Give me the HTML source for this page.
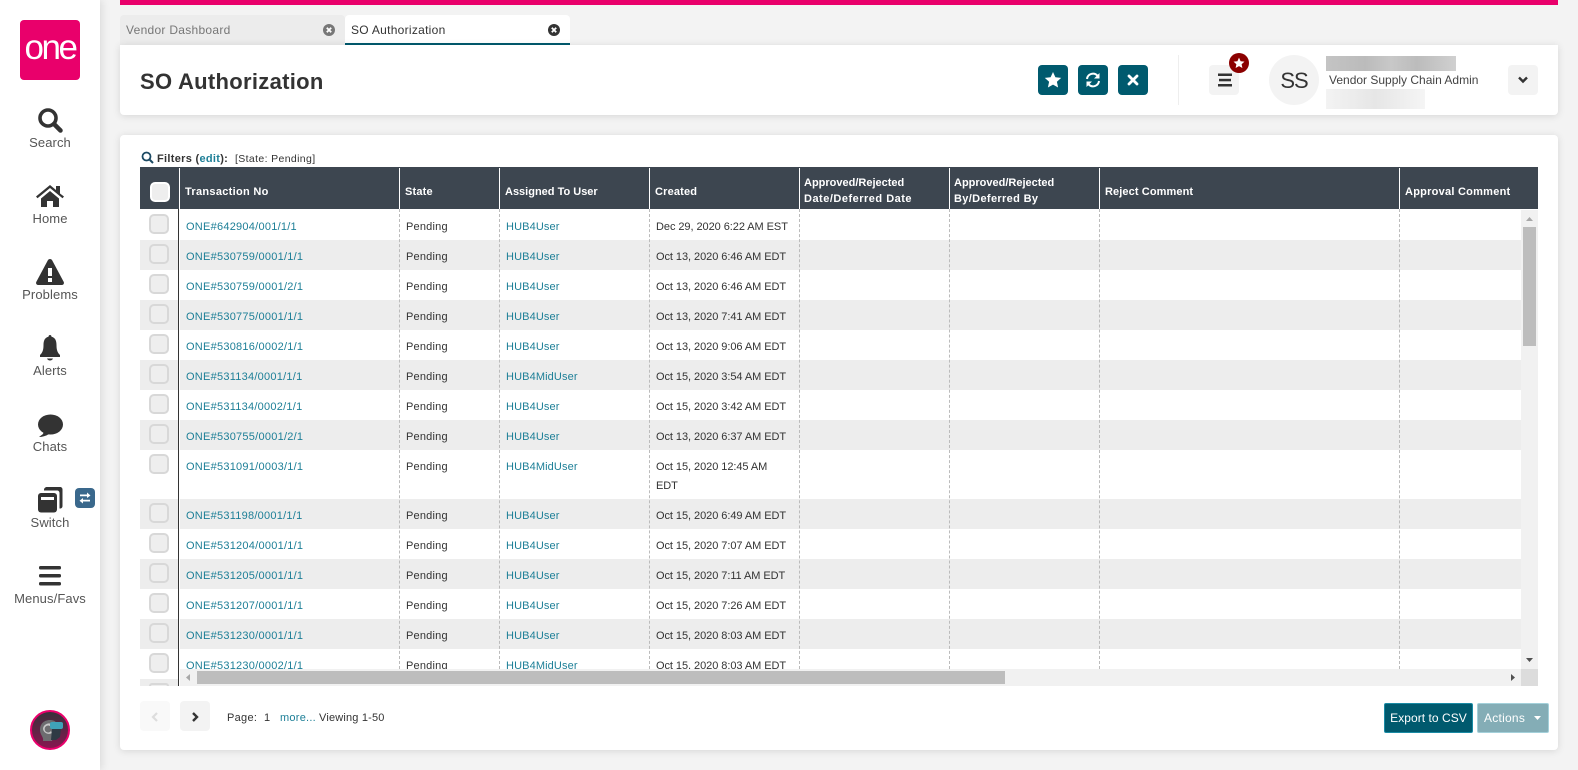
<!DOCTYPE html>
<html><head><meta charset="utf-8"><title>SO Authorization</title>
<style>
*{box-sizing:border-box}
html,body{margin:0;padding:0;width:1578px;height:770px;overflow:hidden;background:#f3f3f3;font-family:"Liberation Sans",Arial,sans-serif;color:#333}
.a{position:absolute}
#side{left:0;top:0;width:100px;height:770px;background:#fff;box-shadow:2px 0 8px rgba(0,0,0,.1)}
.nl{position:absolute;left:0;width:100px;text-align:center;font-size:13px;color:#555;line-height:16px;letter-spacing:.1px;margin-top:1px}
.card{position:absolute;left:120px;width:1438px;background:#fff;box-shadow:0 1px 8px rgba(0,0,0,.12)}
.tab{position:absolute;top:15px;width:225px;height:30px;font-size:12px;line-height:30px;padding-left:6px;letter-spacing:.28px;border-radius:4px 4px 0 0}
.btn{position:absolute;top:65px;width:30px;height:30px;background:#005a6e;border-radius:4px}
.gb{position:absolute;width:30px;height:30px;background:#f3f3f3;border-radius:4px}
.th{position:absolute;color:#fff;font-size:11px;font-weight:bold;line-height:16px;letter-spacing:.17px;margin-top:1px}
.vl{position:absolute;top:168px;width:1px;height:41px;background:#fff}
.dl{position:absolute;top:209px;width:0;height:460px;border-left:1px dashed #bbb}
.r{position:absolute;left:180px;width:1341px;height:30px}
.g{background:#ededed}
.lg{position:absolute;left:140px;width:38px;background:#ededed}
.c{position:absolute;left:149px;width:20px;height:20px;border:2px solid #d8d8d8;border-radius:5px;background:#eee}
.t{position:absolute;font-size:11px;line-height:18px;letter-spacing:.25px;white-space:nowrap;color:#333;margin-top:1px}
.l{color:#1d7f97}
.x1{left:186px}.x2{left:406px;letter-spacing:.2px}.x3{left:506px;letter-spacing:.12px}.x4{left:656px;letter-spacing:-.06px}
</style></head><body>

<div class="a" style="left:120px;top:0;width:1438px;height:5px;background:#e9006b"></div>

<div class="a" id="side">
  <div class="a" style="left:20px;top:20px;width:60px;height:60px;background:#e9006b;border-radius:4px;color:#fff;font-size:35px;line-height:56px;text-align:center;letter-spacing:-2.5px">one</div>
  <svg class="a" style="left:37px;top:106px" width="26" height="28" viewBox="0 0 26 28"><circle cx="11" cy="12" r="8" fill="none" stroke="#333" stroke-width="3.6"/><path d="M17 18l6.500 6.500" stroke="#333" stroke-width="4.500" stroke-linecap="round"/></svg>
  <div class="nl" style="top:134px">Search</div>
  <svg class="a" style="left:35px;top:184px" width="30" height="24" viewBox="0 0 30 24"><path fill="#333" d="M1 12.500L15 1l6 5V2h4v7.500l4 3-1.500 1.800L15 4 2.500 14.300zM6 14.500L15 7l9 7.500V23h-6v-6h-6v6H6z"/></svg>
  <div class="nl" style="top:210px">Home</div>
  <svg class="a" style="left:35px;top:258px" width="30" height="28" viewBox="0 0 30 28"><path fill="#333" d="M15 1c1 0 1.700.5 2.200 1.400l11.500 21.500c.7 1.400-.2 3.100-1.800 3.100H3.100c-1.600 0-2.500-1.700-1.800-3.100L12.800 2.400C13.300 1.500 14 1 15 1z"/><rect x="13" y="10" width="4" height="8" fill="#fff"/><rect x="13" y="20" width="4" height="4" fill="#fff"/></svg>
  <div class="nl" style="top:286px">Problems</div>
  <svg class="a" style="left:38px;top:334px" width="24" height="28" viewBox="0 0 24 28"><path fill="#333" d="M12 1c1 0 1.500.8 1.500 1.800C17 3.500 18.500 6.500 18.500 11c0 6 1.500 8 3.500 10v2H2v-2c2-2 3.500-4 3.500-10 0-4.500 1.500-7.500 5-8.200C10.500 1.800 11 1 12 1z"/><path fill="#333" d="M9 24.500h6c-.5 1.200-1.700 2-3 2s-2.500-.8-3-2z"/></svg>
  <div class="nl" style="top:362px">Alerts</div>
  <svg class="a" style="left:37px;top:414px" width="26" height="24" viewBox="0 0 26 24"><ellipse cx="13.500" cy="10.500" rx="12.500" ry="10" fill="#333"/><path fill="#333" d="M7 17l-1 3-4 3c3 0 7-1 10-3z"/></svg>
  <div class="nl" style="top:438px">Chats</div>
  <svg class="a" style="left:37px;top:486px" width="28" height="28" viewBox="0 0 28 28"><path fill="#333" d="M10 1h13c1.500 0 2.500 1 2.500 2.500V20c0 1.500-1 2.500-2.500 2.500h-.5V7c0-1.500-1-2.500-2.500-2.500H7V4c0-1.800 1.200-3 3-3z"/><rect x="1" y="7" width="19" height="19.500" rx="3" fill="#333"/><rect x="4" y="11" width="13" height="3" fill="#fff"/></svg>
  <div class="a" style="left:75px;top:488px;width:20px;height:20px;background:#3a688c;border-radius:4px"></div>
  <svg class="a" style="left:78px;top:491px" width="14" height="14" viewBox="0 0 14 14"><path fill="#fff" d="M2 3.500h7V1.500l3.500 3L9 7V5.300H2zM12 8.700H5V7L1.500 9.700 5 12.500v-2h7z"/></svg>
  <div class="nl" style="top:514px">Switch</div>
  <svg class="a" style="left:39px;top:565px" width="22" height="22" viewBox="0 0 22 22"><rect y="1" width="22" height="3.500" rx="1.500" fill="#333"/><rect y="9" width="22" height="3.500" rx="1.500" fill="#333"/><rect y="17" width="22" height="3.500" rx="1.500" fill="#333"/></svg>
  <div class="nl" style="top:590px">Menus/Favs</div>
  <svg class="a" style="left:30px;top:710px" width="40" height="40" viewBox="0 0 40 40"><defs><linearGradient id="av" x1="0" y1="0" x2="0" y2="1"><stop offset="0" stop-color="#35323a"/><stop offset="1" stop-color="#8a1650"/></linearGradient></defs><circle cx="20" cy="20" r="19" fill="url(#av)" stroke="#e9006b" stroke-width="2"/><path fill="#6d6d70" d="M10 20c0-7 5-10 10-10 3 0 5 1 7 3l-3 8-2 10H13c1-4-3-6-3-11z"/><path fill="#c9c9c9" d="M13 19a6 6 0 0 1 10-4l-2 2a3.500 3.500 0 1 0 0 4l1 2a6 6 0 0 1-9-4z"/><rect x="20" y="12" width="13" height="7" rx="2" fill="#3fa3b8"/><path fill="#2f3a44" d="M22 19h9l-1 8-4 3h-5z"/></svg>
</div>

<div class="tab" style="left:120px;background:#ececec;color:#777">Vendor Dashboard</div>
<svg class="a" style="left:322px;top:23px" width="14" height="14" viewBox="0 0 14 14"><circle cx="7" cy="7" r="6" fill="#777"/><path d="M4.800 4.800l4.400 4.400M9.200 4.800l-4.400 4.400" stroke="#fff" stroke-width="1.800"/></svg>
<div class="tab" style="left:345px;background:#fff;color:#333;border-bottom:2px solid #005a6e;line-height:31px">SO Authorization</div>
<svg class="a" style="left:547px;top:23px" width="14" height="14" viewBox="0 0 14 14"><circle cx="7" cy="7" r="6" fill="#333"/><path d="M4.800 4.800l4.400 4.400M9.200 4.800l-4.400 4.400" stroke="#fff" stroke-width="1.800"/></svg>

<div class="card" style="top:45px;height:70px;border-radius:0 0 4px 4px"></div>
<div class="a" style="left:140px;top:67px;font-size:22px;font-weight:bold;line-height:30px;color:#333;letter-spacing:.3px">SO Authorization</div>

<div class="btn" style="left:1038px"></div>
<svg class="a" style="left:1044px;top:71px" width="18" height="18" viewBox="0 0 18 18"><path fill="#fff" d="M9 1l2.400 5.300 5.800.6-4.300 3.900 1.200 5.700L9 13.600l-5.100 2.900 1.200-5.700L.8 6.900l5.800-.6z"/></svg>
<div class="btn" style="left:1078px"></div>
<svg class="a" style="left:1085px;top:72px" width="16" height="16" viewBox="0 0 16 16"><path fill="none" stroke="#fff" stroke-width="2" d="M2 7a6 6 0 0 1 10.500-3.200M14 9a6 6 0 0 1-10.500 3.200"/><path fill="#fff" d="M14.500 1v5.500H9zM1.500 15V9.500H7z"/></svg>
<div class="btn" style="left:1118px"></div>
<svg class="a" style="left:1127px;top:74px" width="12" height="12" viewBox="0 0 12 12"><path d="M2 2l8 8M10 2l-8 8" stroke="#fff" stroke-width="2.800" stroke-linecap="round"/></svg>
<div class="a" style="left:1178px;top:55px;width:1px;height:50px;background:#eee"></div>
<div class="gb" style="left:1209px;top:65px"></div>
<svg class="a" style="left:1217px;top:72px" width="16" height="16" viewBox="0 0 16 16"><rect x="1" y="1.500" width="14" height="2.500" fill="#333"/><rect x="2" y="6.800" width="12" height="2.500" fill="#333"/><rect x="1" y="12" width="14" height="2.500" fill="#333"/></svg>
<div class="a" style="left:1229px;top:53px;width:20px;height:20px;border-radius:50%;background:#8b0000"></div>
<svg class="a" style="left:1233px;top:57px" width="12" height="12" viewBox="0 0 18 18"><path fill="#fff" d="M9 1l2.400 5.300 5.800.6-4.300 3.900 1.200 5.700L9 13.600l-5.100 2.900 1.200-5.700L.8 6.900l5.800-.6z"/></svg>
<div class="a" style="left:1269px;top:55px;width:50px;height:50px;border-radius:50%;background:#f3f3f3;font-size:22px;line-height:51px;text-align:center;color:#333;letter-spacing:-1px">SS</div>
<div class="a" style="left:1326px;top:56px;width:130px;height:15px;background:linear-gradient(90deg,#c4c4c4,#bbb 30%,#c8c8c8 50%,#bcbcbc 70%,#d0d0d0)"></div>
<div class="a" style="left:1329px;top:72px;font-size:12px;line-height:16px;color:#444;letter-spacing:0;white-space:nowrap">Vendor Supply Chain Admin</div>
<div class="a" style="left:1326px;top:89px;width:99px;height:20px;background:linear-gradient(90deg,#f3f3f3,#e6e6e6 50%,#f5f5f5)"></div>
<div class="gb" style="left:1508px;top:65px"></div>
<svg class="a" style="left:1517px;top:75px" width="12" height="10" viewBox="0 0 12 10"><path d="M2 2.500L6 6.500 10 2.500" fill="none" stroke="#333" stroke-width="2.400"/></svg>

<div class="card" style="top:135px;height:615px;border-radius:4px"></div>

<svg class="a" style="left:141px;top:151px" width="13" height="13" viewBox="0 0 13 13"><circle cx="5.500" cy="5.500" r="4" fill="none" stroke="#1c4a63" stroke-width="1.800"/><path d="M8.500 8.500l3.500 3.500" stroke="#1c4a63" stroke-width="2"/></svg>
<div class="t" style="left:157px;top:149px;font-weight:bold;letter-spacing:.3px">Filters (<span class="l">edit</span>):</div>
<div class="t" style="left:235px;top:149px;font-size:10.500px;letter-spacing:.36px">[State: Pending]</div>

<!-- table rows -->
<div class="r g" style="top:240px"></div>
<div class="r g" style="top:300px"></div>
<div class="r g" style="top:360px"></div>
<div class="r g" style="top:420px"></div>
<div class="r g" style="top:499px"></div>
<div class="r g" style="top:559px"></div>
<div class="r g" style="top:619px"></div>
<div class="lg" style="top:240px;height:30px"></div>
<div class="lg" style="top:300px;height:30px"></div>
<div class="lg" style="top:360px;height:30px"></div>
<div class="lg" style="top:420px;height:30px"></div>
<div class="lg" style="top:499px;height:30px"></div>
<div class="lg" style="top:559px;height:30px"></div>
<div class="lg" style="top:619px;height:30px"></div>
<div class="lg" style="top:679px;height:7px"></div>

<div class="c" style="top:214px"></div><div class="c" style="top:244px"></div><div class="c" style="top:274px"></div><div class="c" style="top:304px"></div><div class="c" style="top:334px"></div><div class="c" style="top:364px"></div><div class="c" style="top:394px"></div><div class="c" style="top:424px"></div><div class="c" style="top:454px"></div><div class="c" style="top:503px"></div><div class="c" style="top:533px"></div><div class="c" style="top:563px"></div><div class="c" style="top:593px"></div><div class="c" style="top:623px"></div><div class="c" style="top:653px"></div>
<div class="a" style="left:149px;top:683px;width:20px;height:3px;border:2px solid #d8d8d8;border-bottom:0;border-radius:5px 5px 0 0;background:#eee"></div>

<div class="t l x1" style="top:217px">ONE#642904/001/1/1</div><div class="t x2" style="top:217px">Pending</div><div class="t l x3" style="top:217px">HUB4User</div><div class="t x4" style="top:217px">Dec 29, 2020 6:22 AM EST</div>
<div class="t l x1" style="top:247px">ONE#530759/0001/1/1</div><div class="t x2" style="top:247px">Pending</div><div class="t l x3" style="top:247px">HUB4User</div><div class="t x4" style="top:247px">Oct 13, 2020 6:46 AM EDT</div>
<div class="t l x1" style="top:277px">ONE#530759/0001/2/1</div><div class="t x2" style="top:277px">Pending</div><div class="t l x3" style="top:277px">HUB4User</div><div class="t x4" style="top:277px">Oct 13, 2020 6:46 AM EDT</div>
<div class="t l x1" style="top:307px">ONE#530775/0001/1/1</div><div class="t x2" style="top:307px">Pending</div><div class="t l x3" style="top:307px">HUB4User</div><div class="t x4" style="top:307px">Oct 13, 2020 7:41 AM EDT</div>
<div class="t l x1" style="top:337px">ONE#530816/0002/1/1</div><div class="t x2" style="top:337px">Pending</div><div class="t l x3" style="top:337px">HUB4User</div><div class="t x4" style="top:337px">Oct 13, 2020 9:06 AM EDT</div>
<div class="t l x1" style="top:367px">ONE#531134/0001/1/1</div><div class="t x2" style="top:367px">Pending</div><div class="t l x3" style="top:367px">HUB4MidUser</div><div class="t x4" style="top:367px">Oct 15, 2020 3:54 AM EDT</div>
<div class="t l x1" style="top:397px">ONE#531134/0002/1/1</div><div class="t x2" style="top:397px">Pending</div><div class="t l x3" style="top:397px">HUB4User</div><div class="t x4" style="top:397px">Oct 15, 2020 3:42 AM EDT</div>
<div class="t l x1" style="top:427px">ONE#530755/0001/2/1</div><div class="t x2" style="top:427px">Pending</div><div class="t l x3" style="top:427px">HUB4User</div><div class="t x4" style="top:427px">Oct 13, 2020 6:37 AM EDT</div>
<div class="t l x1" style="top:457px">ONE#531091/0003/1/1</div><div class="t x2" style="top:457px">Pending</div><div class="t l x3" style="top:457px">HUB4MidUser</div><div class="t x4" style="top:457px">Oct 15, 2020 12:45 AM</div><div class="t x4" style="top:476px">EDT</div>
<div class="t l x1" style="top:506px">ONE#531198/0001/1/1</div><div class="t x2" style="top:506px">Pending</div><div class="t l x3" style="top:506px">HUB4User</div><div class="t x4" style="top:506px">Oct 15, 2020 6:49 AM EDT</div>
<div class="t l x1" style="top:536px">ONE#531204/0001/1/1</div><div class="t x2" style="top:536px">Pending</div><div class="t l x3" style="top:536px">HUB4User</div><div class="t x4" style="top:536px">Oct 15, 2020 7:07 AM EDT</div>
<div class="t l x1" style="top:566px">ONE#531205/0001/1/1</div><div class="t x2" style="top:566px">Pending</div><div class="t l x3" style="top:566px">HUB4User</div><div class="t x4" style="top:566px">Oct 15, 2020 7:11 AM EDT</div>
<div class="t l x1" style="top:596px">ONE#531207/0001/1/1</div><div class="t x2" style="top:596px">Pending</div><div class="t l x3" style="top:596px">HUB4User</div><div class="t x4" style="top:596px">Oct 15, 2020 7:26 AM EDT</div>
<div class="t l x1" style="top:626px">ONE#531230/0001/1/1</div><div class="t x2" style="top:626px">Pending</div><div class="t l x3" style="top:626px">HUB4User</div><div class="t x4" style="top:626px">Oct 15, 2020 8:03 AM EDT</div>
<div class="t l x1" style="top:656px">ONE#531230/0002/1/1</div><div class="t x2" style="top:656px">Pending</div><div class="t l x3" style="top:656px">HUB4MidUser</div><div class="t x4" style="top:656px">Oct 15, 2020 8:03 AM EDT</div>

<div class="dl" style="left:399px"></div><div class="dl" style="left:499px"></div><div class="dl" style="left:649px"></div><div class="dl" style="left:799px"></div><div class="dl" style="left:949px"></div><div class="dl" style="left:1099px"></div><div class="dl" style="left:1399px"></div>
<div class="a" style="left:178px;top:209px;width:1px;height:477px;background:#333"></div>

<!-- header -->
<div class="a" style="left:140px;top:167px;width:1398px;height:42px;background:#3d4650"></div>
<div class="vl" style="left:179px"></div><div class="vl" style="left:399px"></div><div class="vl" style="left:499px"></div><div class="vl" style="left:649px"></div><div class="vl" style="left:799px"></div><div class="vl" style="left:949px"></div><div class="vl" style="left:1099px"></div><div class="vl" style="left:1399px"></div>
<div class="a" style="left:150px;top:182px;width:20px;height:20px;border:2px solid #fff;border-radius:5px;background:#eee"></div>
<div class="th" style="left:185px;top:183px;letter-spacing:.3px">Transaction No</div>
<div class="th" style="left:405px;top:183px">State</div>
<div class="th" style="left:505px;top:183px;letter-spacing:0">Assigned To User</div>
<div class="th" style="left:655px;top:183px">Created</div>
<div class="th" style="left:804px;top:174px;letter-spacing:0">Approved/Rejected<br><span style="letter-spacing:.5px">Date/Deferred Date</span></div>
<div class="th" style="left:954px;top:174px;letter-spacing:0">Approved/Rejected<br><span style="letter-spacing:.35px">By/Deferred By</span></div>
<div class="th" style="left:1105px;top:183px;letter-spacing:.1px">Reject Comment</div>
<div class="th" style="left:1405px;top:183px;letter-spacing:.25px">Approval Comment</div>

<!-- scrollbars -->
<div class="a" style="left:1521px;top:210px;width:17px;height:459px;background:#f1f1f1"></div>
<div class="a" style="left:1523px;top:227px;width:13px;height:119px;background:#bdbdbd"></div>
<svg class="a" style="left:1525px;top:216px" width="9" height="6"><path d="M4.500 1L8 5H1z" fill="#a8a8a8"/></svg>
<svg class="a" style="left:1525px;top:657px" width="9" height="6"><path d="M4.500 5L8 1H1z" fill="#505050"/></svg>
<div class="a" style="left:180px;top:669px;width:1341px;height:17px;background:#f1f1f1"></div>
<div class="a" style="left:197px;top:671px;width:808px;height:13px;background:#bdbdbd"></div>
<svg class="a" style="left:185px;top:673px" width="6" height="9"><path d="M1 4.500L5 1v7z" fill="#a8a8a8"/></svg>
<svg class="a" style="left:1510px;top:673px" width="6" height="9"><path d="M5 4.500L1 1v7z" fill="#505050"/></svg>
<div class="a" style="left:1521px;top:669px;width:17px;height:17px;background:#dcdcdc"></div>

<!-- footer -->
<div class="gb" style="left:140px;top:701px;background:#f9f9f9"></div>
<svg class="a" style="left:150px;top:711px" width="10" height="12" viewBox="0 0 10 12"><path d="M7 2L3 6l4 4" fill="none" stroke="#ddd" stroke-width="2.200"/></svg>
<div class="gb" style="left:180px;top:701px"></div>
<svg class="a" style="left:190px;top:711px" width="10" height="12" viewBox="0 0 10 12"><path d="M3 2l4 4-4 4" fill="none" stroke="#333" stroke-width="2.400"/></svg>
<div class="t" style="left:227px;top:708px;letter-spacing:.3px">Page:</div>
<div class="t" style="left:264px;top:708px">1</div>
<div class="t l" style="left:280px;top:708px">more...</div>
<div class="t" style="left:319px;top:708px;letter-spacing:.18px">Viewing 1-50</div>

<div class="a" style="left:1384px;top:703px;width:89px;height:30px;background:#005a6e;border:1px solid #1a8ba5;border-radius:2px;color:#fff;font-size:12px;line-height:28px;text-align:center;letter-spacing:.05px">Export to CSV</div>
<div class="a" style="left:1477px;top:703px;width:72px;height:30px;background:#84adb6;border:1px solid #a3d0da;border-radius:2px;color:#fff;font-size:12px;line-height:28px;padding-left:6px;letter-spacing:.25px">Actions</div>
<svg class="a" style="left:1533px;top:715px" width="9" height="6"><path d="M1 1h7L4.500 5z" fill="#fff"/></svg>

</body></html>
